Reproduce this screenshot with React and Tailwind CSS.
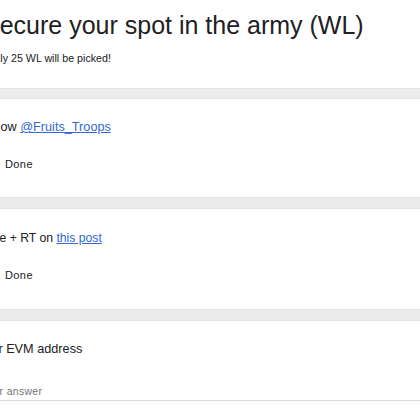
import React from 'react';

function Band({ tall }) {
  return <div className={tall ? 'h-[12px] bg-[#ececec] border-y border-[#e2e2e2]' : 'h-[11px] bg-[#ececec] border-y border-[#e2e2e2]'} />;
}

function CheckRow({ label }) {
  return (
    <div className="flex items-center gap-[10px] ml-[-19px] h-[14px]">
      <span className="w-[14px] h-[14px] border-2 border-[#5f6368] rounded-[2px] shrink-0" />
      <span className="text-[11px] tracking-[0.4px] text-[#202124]">{label}</span>
    </div>
  );
}

function App() {
  return (
    <div className="w-[420px] h-[420px] overflow-hidden bg-white font-['Liberation_Sans',Arial,sans-serif] text-[#202124]">
      <div className="h-[88px] pt-[9px]">
        <h1 className="text-[25px] leading-[32px] ml-[-17px] whitespace-nowrap">
          Secure your spot in the army (WL)
        </h1>
        <p className="text-[10.7px] leading-[14px] mt-[10px] ml-[-14px] whitespace-nowrap">
          Only 25 WL will be picked!
        </p>
      </div>
      <Band />

      <div className="h-[98px] pt-[20px]">
        <p className="text-[12.7px] leading-[16px] ml-[-20px] whitespace-nowrap">
          Follow <a href="#" className="text-[#3367d6] underline">@Fruits_Troops</a>
        </p>
        <div className="mt-[22px]">
          <CheckRow label="Done" />
        </div>
      </div>
      <Band tall />

      <div className="h-[100px] pt-[21px]">
        <p className="text-[12.2px] leading-[16px] ml-[-16px] whitespace-nowrap">
          Like + RT on <a href="#" className="text-[#3367d6] underline">this post</a>
        </p>
        <div className="mt-[22px]">
          <CheckRow label="Done" />
        </div>
      </div>
      <Band tall />

      <div className="pt-[20px]">
        <p className="text-[12.7px] leading-[16px] ml-[-23px] whitespace-nowrap">
          Your EVM address
        </p>
        <div className="mt-[27px] border-b border-[#dadce0] pb-[2px]">
          <span className="block text-[10.5px] leading-[14px] tracking-[0.3px] text-[#70757a] ml-[-19px] whitespace-nowrap">
            Your answer
          </span>
        </div>
      </div>
    </div>
  );
}

export default App;
